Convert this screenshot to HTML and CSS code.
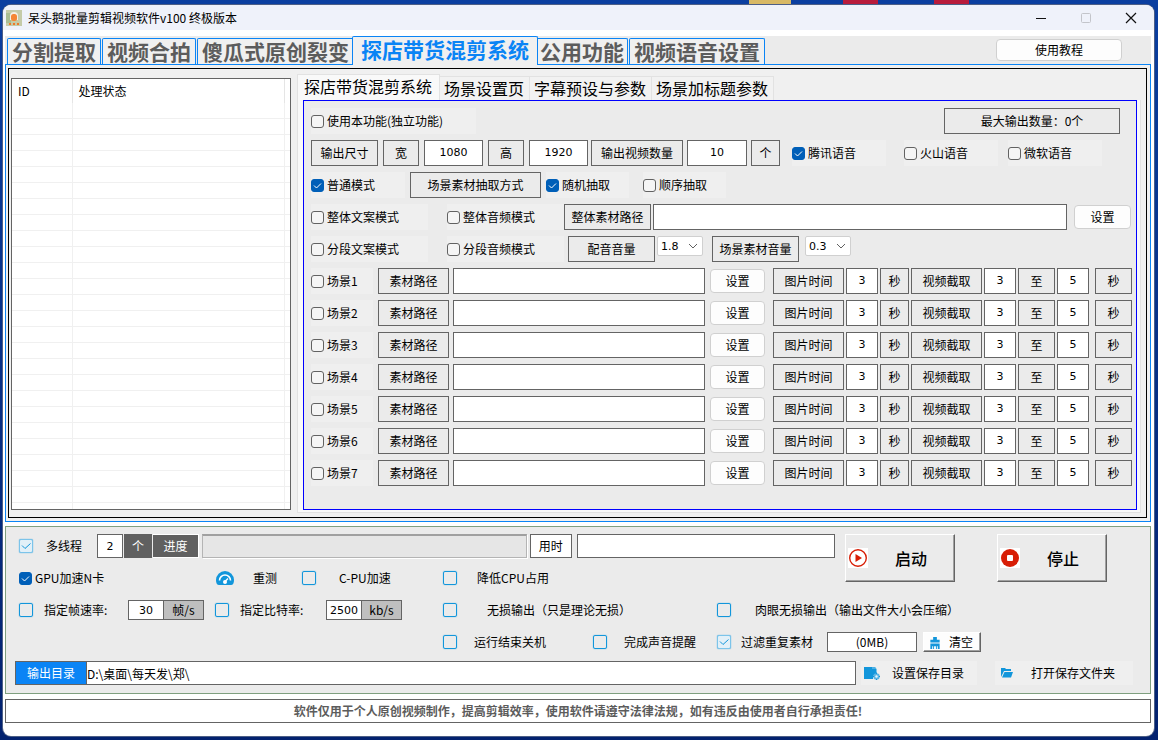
FILE: index.html
```html
<!DOCTYPE html>
<html lang="zh-CN">
<head>
<meta charset="utf-8">
<title>呆头鹅批量剪辑视频软件v100 终极版本</title>
<link rel="stylesheet" href="styles.css">
</head>
<body>
<div class="window">
  <header class="titlebar">
    <svg class="app-icon" viewBox="0 0 16 16"><rect width="16" height="16" fill="#c5cba8"/><path d="M0 3h5v10H0z" fill="#a9bd93"/><path d="M4 10V6q0-4 4-4t4 4v4z" fill="#f4f0e4"/><rect x="5" y="4" width="6" height="7" rx="2.500" fill="#f58634"/><path d="M3 13h2v2H3zM7 13h2v2H7zM11 13h2v2h-2z" fill="#ee7a2b"/></svg>
    <h1 class="title">呆头鹅批量剪辑视频软件v100 终极版本</h1>
    <button class="win-btn" aria-label="最小化"><svg viewBox="0 0 12 12"><path d="M1 6.500h10" stroke="#111"/></svg></button>
    <button class="win-btn" aria-label="最大化" disabled><svg viewBox="0 0 12 12"><rect x="1.500" y="1.500" width="9" height="9" rx="1" fill="none" stroke="#c3c5ca"/></svg></button>
    <button class="win-btn" aria-label="关闭"><svg viewBox="0 0 12 12"><path d="M1 1l10 10M11 1L1 11" stroke="#111" stroke-width="1.200"/></svg></button>
  </header>

  <div class="content">
    <div class="topbar">
      <nav class="tabs">
        <button class="tab">分割提取</button>
        <button class="tab">视频合拍</button>
        <button class="tab">傻瓜式原创裂变</button>
        <button class="tab active">探店带货混剪系统</button>
        <button class="tab">公用功能</button>
        <button class="tab">视频语音设置</button>
      </nav>
      <button class="btn tutorial">使用教程</button>
    </div>

    <main class="page">
      <div class="page-inner">
        <div class="list">
          <table class="list-head"><thead><tr><th class="col-id">ID</th><th class="col-state">处理状态</th><th></th></tr></thead></table>
          <div class="list-body"></div>
        </div>

        <section class="sub">
          <nav class="subtabs">
            <button class="subtab active">探店带货混剪系统</button>
            <button class="subtab">场景设置页</button>
            <button class="subtab">字幕预设与参数</button>
            <button class="subtab">场景加标题参数</button>
          </nav>
          <div class="sub-page">
            <div class="form">
              <div class="row first-row">
                <label class="check"><input type="checkbox">使用本功能(独立功能)</label>
                <span class="box">最大输出数量：0个</span>
              </div>
              <div class="row size-row">
                <span class="box w-size">输出尺寸</span>
                <span class="box w-side">宽</span>
                <input class="field num w-dim" value="1080" aria-label="宽">
                <span class="box w-side">高</span>
                <input class="field num w-dim" value="1920" aria-label="高">
                <span class="box w-count">输出视频数量</span>
                <input class="field num w-amount" value="10" aria-label="输出视频数量">
                <span class="box w-unit">个</span>
                <label class="check tencent"><input type="checkbox" checked>腾讯语音</label>
                <label class="check huoshan"><input type="checkbox">火山语音</label>
                <label class="check"><input type="checkbox">微软语音</label>
              </div>
              <div class="row mode-row">
                <label class="check"><input type="checkbox" checked>普通模式</label>
                <span class="box">场景素材抽取方式</span>
                <label class="check"><input type="checkbox" checked>随机抽取</label>
                <label class="check"><input type="checkbox">顺序抽取</label>
              </div>
              <div class="row whole-row">
                <label class="check"><input type="checkbox">整体文案模式</label>
                <label class="check"><input type="checkbox">整体音频模式</label>
                <span class="box">整体素材路径</span>
                <input class="field" aria-label="整体素材路径">
                <button class="btn">设置</button>
              </div>
              <div class="row part-row">
                <label class="check"><input type="checkbox">分段文案模式</label>
                <label class="check"><input type="checkbox">分段音频模式</label>
                <span class="box">配音音量</span>
                <select class="select" aria-label="配音音量"><option>1.8</option></select>
                <span class="box">场景素材音量</span>
                <select class="select" aria-label="场景素材音量"><option>0.3</option></select>
              </div>
              <div class="scenes" id="scenes"></div>
            </div>
          </div>
        </section>
      </div>
    </main>

    <section class="panel">
      <div class="panel-top">
        <div class="panel-left">
          <div class="line run-line">
            <label class="opt"><input type="checkbox" checked>多线程</label>
            <input class="field num" value="2" aria-label="线程数">
            <span class="dark">个</span>
            <span class="dark raised">进度</span>
            <div class="progress" role="progressbar" aria-label="进度"></div>
            <span class="box white">用时</span>
            <input class="field elapsed" aria-label="用时">
          </div>
          <div class="line gpu-line">
            <label class="check plain"><input type="checkbox" checked>GPU加速N卡</label>
            <button class="retest"><svg viewBox="0 0 20 16"><path d="M4 15Q1 15 1 10a9 9 0 0 1 18 0q0 5-3 5z" fill="#1296db"/><path d="M4.500 10.500a5.500 5.500 0 0 1 11 0" fill="none" stroke="#fff" stroke-width="1.600"/><path d="M9.500 12L13 8.500" stroke="#fff" stroke-width="1.500"/><circle cx="10" cy="12" r="2" fill="#fff"/></svg>重测</button>
            <label class="opt"><input type="checkbox">C-PU加速</label>
            <label class="opt"><input type="checkbox">降低CPU占用</label>
          </div>
        </div>
        <button class="big"><svg viewBox="0 0 20 20"><path d="M0 0h20v20H0z" fill="#fff"/><circle cx="10" cy="10" r="8.300" fill="none" stroke="#d81e06" stroke-width="1.400"/><path d="M7.500 6v8l6.500-4z" fill="#d81e06"/></svg><span>启动</span></button>
        <button class="big"><svg viewBox="0 0 20 20"><path d="M0 0h20v20H0z" fill="#fff"/><circle cx="10" cy="10" r="9" fill="#d81e06"/><rect x="7" y="7" width="6" height="6" rx="1" fill="#fff"/></svg><span>停止</span></button>
      </div>
      <div class="line rate-line">
        <label class="opt"><input type="checkbox">指定帧速率:</label>
        <input class="field num small" value="30" aria-label="帧速率">
        <span class="unit">帧/s</span>
        <label class="opt"><input type="checkbox">指定比特率:</label>
        <input class="field num small" value="2500" aria-label="比特率">
        <span class="unit">kb/s</span>
        <label class="opt"><input type="checkbox">无损输出（只是理论无损）</label>
        <label class="opt"><input type="checkbox">肉眼无损输出（输出文件大小会压缩）</label>
      </div>
      <div class="line end-line">
        <label class="opt"><input type="checkbox">运行结束关机</label>
        <label class="opt"><input type="checkbox">完成声音提醒</label>
        <label class="opt"><input type="checkbox" checked>过滤重复素材</label>
        <span class="box white small">(0MB)</span>
        <button class="clear"><svg viewBox="0 0 12 14"><path d="M4 1h4v3h3v3H1V4h3z" fill="#1296db"/><path d="M1 8h10v6H9v-3H8v3H7v-3H5v3H4v-3H3v3H1z" fill="#1296db"/></svg>清空</button>
      </div>
      <div class="line out-line">
        <button class="out-btn">输出目录</button>
        <input class="field path" value="D:\桌面\每天发\郑\" aria-label="输出目录">
        <button class="link-btn save"><svg viewBox="0 0 16 14"><path d="M0 1h11l1.500 2v5L9 10v3H0z" fill="#1296db"/><path d="M8 2h4" stroke="#8acbed"/><circle cx="12.500" cy="10.500" r="3.200" fill="#5bb5e5"/><circle cx="12.500" cy="10.500" r="1.200" fill="#e8f5fc"/><path d="M12.500 6.500v1.500M12.500 13v1M9 10.500h1M15 10.500h1" stroke="#1296db"/></svg>设置保存目录</button>
        <button class="link-btn open"><svg viewBox="0 0 12 10"><path d="M0 9V0h4l1 1h5v2H3z" fill="#1296db"/><path d="M3.500 4H12l-2 5.500H1z" fill="#1296db"/></svg>打开保存文件夹</button>
      </div>
    </section>

    <footer class="notice">软件仅用于个人原创视频制作，提高剪辑效率，使用软件请遵守法律法规，如有违反由使用者自行承担责任!</footer>
  </div>
</div>
<script src="scenes.js"></script>
</body>
</html>
```

FILE: styles.css
```css
* { box-sizing: border-box; }

body {
  margin: 0;
  min-height: 100vh;
  padding: 5px 4px 4px 3px;
  display: flex;
  font: 12px/16px "Noto Sans CJK SC", sans-serif;
  color: #000;
  background:
    linear-gradient(#d8b965, #d8b965) 749px 0 / 42px 5px no-repeat,
    linear-gradient(#b81c3c, #b81c3c) 843px 0 / 35px 5px no-repeat,
    linear-gradient(#b81c3c, #b81c3c) 934px 0 / 35px 5px no-repeat,
    linear-gradient(#0b3fa0, #03226f);
}

button, input, select { font: inherit; color: inherit; margin: 0; }
button { padding: 0; border: 0; background: none; white-space: nowrap; }
svg { display: block; flex: none; }

.window {
  flex: 1;
  min-width: 0;
  background: #fff;
  border-radius: 8px;
  overflow: hidden;
  box-shadow: 0 0 0 1px #4d5f86;
}

.titlebar { display: flex; align-items: center; height: 25px; padding: 0 1px 0 3px; background: #eff2fa; }
.app-icon { width: 16px; height: 16px; }
.title { flex: 1; margin: 0 0 0 6px; font-size: 12px; font-weight: 400; }
.win-btn { width: 45px; height: 25px; display: grid; place-items: center; }
.win-btn svg { width: 12px; height: 12px; }

.content { padding: 6px 3px 12px 2px; }

/* main tabs */
.topbar { display: flex; align-items: flex-end; height: 28px; padding-left: 2px; background: #ebebeb; }
.tabs { flex: 1; display: flex; align-items: flex-end; gap: 1px; }
.tab {
  height: 26px;
  padding: 0 4px 2px;
  border: 1px solid #0a84f5;
  border-bottom: 0;
  border-radius: 2px 2px 0 0;
  background: #f0f0f0;
  color: #5c5c5c;
  font-size: 21px;
  line-height: 20px;
  font-weight: 700;
}
.tab.active { height: 29px; margin: 0 -3px -1px; padding: 0 8px 5px; color: #0a84f5; position: relative; }
.tab.active + .tab { padding: 0 3px 2px; }
.btn {
  height: 24px;
  border: 1px solid #d0d0d0;
  border-radius: 4px;
  background: #fdfdfd;
}
.tutorial { width: 126px; height: 22px; margin: 0 29px 3px 0; }

.page { border: 1px solid #0a84f5; padding: 3px 3px 3px 2px; background: #f0f0f0; }
.page-inner { display: flex; gap: 6px; padding: 5px 5px 4px 2px; border: 1px solid #000; }

/* task list */
.list { width: 280px; flex: none; margin: 4px 0 3px; display: flex; flex-direction: column; border: 1px solid #646464; background: #fff; }
.list-head { width: 100%; height: 24px; table-layout: fixed; border-collapse: collapse; }
.list-head th { padding: 0 0 0 6px; text-align: left; font-weight: 400; border-right: 1px solid #e5e5e5; }
.list-head th:last-child { border: 0; padding: 0; }
.col-id { width: 60px; }
.col-state { width: 212px; }
.list-body {
  flex: 1;
  background:
    linear-gradient(#f0f0f0, #f0f0f0) 60px 0 / 1px 100% no-repeat,
    linear-gradient(#f0f0f0, #f0f0f0) 272px 0 / 1px 100% no-repeat,
    repeating-linear-gradient(#fff 0 15px, #f0f0f0 15px 16px);
}

/* inner tabs */
.sub { flex: 1; min-width: 0; }
.subtabs { display: flex; align-items: flex-end; height: 26px; }
.subtab {
  height: 24px;
  padding: 0 5px 2px 4px;
  border: 1px solid #e2e2e2;
  border-width: 1px 1px 0 0;
  background: #f2f2f2;
  font-size: 16px;
  line-height: 20px;
}
.subtab.active { height: 26px; padding: 0 7px 4px 6px; border-left-width: 1px; background: #f9f9f9; }
.sub-page { padding: 0 3px 2px 5px; border: 1px solid #e2e2e2; border-top: 0; background: #f9f9f9; }

.form { display: flex; flex-direction: column; gap: 6px; padding: 7px 4px 23px 7px; border: 1px solid #0000ff; background: #ebebeb; }
.row { display: flex; height: 26px; }
.row > * { flex: none; }
.box {
  display: flex;
  align-items: center;
  justify-content: center;
  border: 1px solid #646464;
  white-space: nowrap;
}
.white { background: #fff; }
.field { min-width: 0; border: 1px solid #646464; border-radius: 0; background: #fff; padding: 0; outline: 0; }
.num { text-align: center; font-size: 11px; font-family: "DejaVu Sans", sans-serif; }

.check { display: flex; align-items: center; gap: 3px; background: #efefef; white-space: nowrap; }
.check input {
  appearance: none;
  flex: none;
  width: 13px;
  height: 13px;
  border: 1px solid #626262;
  border-radius: 3px;
  background: #f5f5f5;
}
.check input:checked {
  border-color: #005fb8;
  background: #005fb8 url("data:image/svg+xml,%3Csvg xmlns='http://www.w3.org/2000/svg' viewBox='0 0 11 11'%3E%3Cpath d='M2 5.500l2.500 2.500L9 3.500' fill='none' stroke='%23fff'/%3E%3C/svg%3E");
}
.plain { background: none; }
.row .btn { align-self: center; }

.first-row { justify-content: space-between; padding-right: 12px; }
.first-row .check { width: 165px; }
.first-row .box { width: 176px; }

.size-row { gap: 5px; }
.w-size { width: 67px; }
.w-side { width: 36px; }
.w-dim { width: 59px; }
.w-count { width: 92px; margin-left: -2px; }
.w-amount { width: 60px; margin-left: -1px; }
.w-unit { width: 29px; margin-left: -1px; }
.size-row .check { width: 94px; margin-left: 5px; }
.size-row .tencent { margin-left: 7px; }
.size-row .huoshan { margin-left: 13px; }

.mode-row { gap: 5px; }
.mode-row .check { width: 83px; }
.mode-row .check:first-child { width: 94px; }
.mode-row .check:last-child { margin-left: 9px; }
.mode-row .box { width: 131px; }

.whole-row .check, .part-row .check { width: 117px; }
.whole-row .check:first-child, .part-row .check:first-child { margin-right: 19px; }
.whole-row .box { width: 87px; margin-right: 2px; }
.whole-row .field { flex: 1; }
.whole-row .btn { width: 57px; margin: 0 1px 0 7px; }
.part-row .box { width: 87px; margin-left: 4px; }
.part-row .select { margin: 0 5px 0 2px; }
.part-row .select:last-child { margin-left: 6px; }

.select {
  appearance: none;
  width: 46px;
  height: 20px;
  padding: 0 0 0 3px;
  border: 1px solid #d0d0d0;
  border-radius: 2px;
  background: #fff url("data:image/svg+xml,%3Csvg xmlns='http://www.w3.org/2000/svg' width='10' height='6'%3E%3Cpath d='M1 1l4 4 4-4' fill='none' stroke='%23606060'/%3E%3C/svg%3E") right 4px center no-repeat;
  font: 11px "DejaVu Sans", sans-serif;
}

.scenes { display: flex; flex-direction: column; gap: 6px; }
.scene { gap: 2px; }
.scene .check { width: 62px; }
.scene .label { width: 71px; }
.scene .num { width: 32px; }
.scene .sec { width: 29px; }
.scene .to { width: 37px; }
.scene .source { margin-left: 3px; }
.scene .source + .field { flex: 1; margin: 0 3px 0 2px; }
.scene .btn { width: 55px; margin-right: 6px; }
.scene .to:last-child { margin-left: 4px; }

/* lower panel */
.panel {
  margin-top: 4px;
  padding: 7px 17px 8px 9px;
  border: 1px solid #7f9f7f;
  background: #ebebeb;
  display: flex;
  flex-direction: column;
  gap: 8px;
}
.panel-top { display: flex; padding: 0 26px 0 4px; }
.panel-left { flex: 1; min-width: 0; display: flex; flex-direction: column; gap: 8px; margin-right: 10px; }
.line { display: flex; align-items: center; height: 24px; }
.run-line > *:not(.opt) { height: 24px; }
.run-line .opt { width: 78px; gap: 13px; }
.run-line .num { width: 26px; margin-right: 1px; }
.dark { display: grid; place-items: center; flex: none; width: 28px; margin-right: 1px; background: #606060; color: #fff; }
.raised { width: 46px; margin-right: 3px; border: 1px solid #fff; border-width: 1px 1px 1px 0; }
.progress { flex: 325; border: 1px solid #b4b4b4; border-top: 2px solid #a0a0a0; background: #e6e6e6; box-shadow: 1px 1px #fff; }
.run-line .white { width: 42px; flex: none; margin: 0 5px 0 3px; }
.run-line .elapsed { flex: 258; width: 0; }

.opt { display: flex; align-items: center; flex: none; white-space: nowrap; }
.opt input {
  appearance: none;
  flex: none;
  width: 14px;
  height: 14px;
  border: 1px solid #1296db;
  border-radius: 2px;
  box-shadow: 0 0 1px #1296db;
}
.opt input:checked {
  border-color: #7cc4ea;
  background: #e2f0f8 url("data:image/svg+xml,%3Csvg xmlns='http://www.w3.org/2000/svg' viewBox='0 0 12 12'%3E%3Cpath d='M2 5.500l3 3L10.500 3.500' fill='none' stroke='%231296db'/%3E%3C/svg%3E");
}
.gpu-line .plain { width: 196px; }
.retest { display: flex; align-items: center; gap: 18px; width: 87px; }
.retest svg { width: 20px; height: 16px; }
.gpu-line .opt { width: 141px; gap: 23px; }
.gpu-line .opt:last-child { width: auto; gap: 20px; }

.big {
  flex: none;
  display: flex;
  align-items: center;
  width: 110px;
  height: 48px;
  padding-left: 2px;
  border: 1px solid;
  border-color: #fff #646464 #646464 #fff;
  box-shadow: inset -1px -1px #a0a0a0;
  font-size: 16px;
  font-weight: 500;
}
.big + .big { margin-left: 42px; }
.big svg { width: 20px; height: 20px; margin-right: 27px; }

.rate-line, .end-line { padding-left: 4px; }
.rate-line .opt { gap: 11px; }
.rate-line .opt:first-child { width: 109px; }
.small { height: 20px; }
.rate-line .num { width: 36px; }
.unit { display: grid; place-items: center; width: 40px; height: 20px; margin-right: 11px; border: 1px solid #646464; border-left: 0; background: #bfbfbf; }
.rate-line .opt:nth-child(4) { width: 111px; }
.rate-line .opt:nth-child(7) { width: 274px; gap: 30px; margin-left: 30px; }
.rate-line .opt:nth-child(8) { gap: 24px; }
.end-line { padding-left: 428px; }
.end-line .opt { width: 150px; gap: 17px; }
.end-line .opt:nth-child(2) { width: 124px; }
.end-line .opt:nth-child(3) { width: 110px; gap: 10px; }
.end-line .box { width: 90px; }
.clear {
  display: flex;
  align-items: center;
  gap: 8px;
  width: 58px;
  height: 20px;
  margin-left: 6px;
  padding-left: 5px;
  border: 1px solid;
  border-color: #fff #646464 #646464 #fff;
  background: #fdfdfd;
  box-shadow: inset -1px -1px #a0a0a0;
}
.clear svg { width: 12px; height: 13px; }

.out-line { margin-top: -1px; }
.out-line > * { height: 24px; }
.out-btn { width: 71px; background: #0a84f5; color: #fff; border: 1px solid #646464; border-right: 0; }
.path { flex: 1; }
.link-btn { display: flex; align-items: center; width: 116px; padding-left: 3px; background: #efefef; }
.save { margin: 0 18px 0 5px; gap: 12px; }
.save svg { width: 16px; height: 14px; }
.open { width: 138px; padding-left: 6px; gap: 18px; }
.open svg { width: 12px; height: 10px; }

.notice {
  margin-top: 5px;
  padding: 3px 0;
  border: 1px solid #646464;
  background: #fff;
  color: #5c5c5c;
  font-weight: 700;
  text-align: center;
}
```

FILE: scenes.js
```js
const scenes = document.getElementById("scenes");
for (let i = 1; i <= 7; i++) {
  scenes.insertAdjacentHTML("beforeend", `
    <div class="row scene">
      <label class="check"><input type="checkbox">场景${i}</label>
      <span class="box label source">素材路径</span>
      <input class="field" aria-label="场景${i}素材路径">
      <button class="btn">设置</button>
      <span class="box label">图片时间</span>
      <input class="field num" value="3" aria-label="场景${i}图片时间">
      <span class="box sec">秒</span>
      <span class="box label">视频截取</span>
      <input class="field num" value="3" aria-label="场景${i}截取起点">
      <span class="box to">至</span>
      <input class="field num" value="5" aria-label="场景${i}截取终点">
      <span class="box to">秒</span>
    </div>`);
}
```
